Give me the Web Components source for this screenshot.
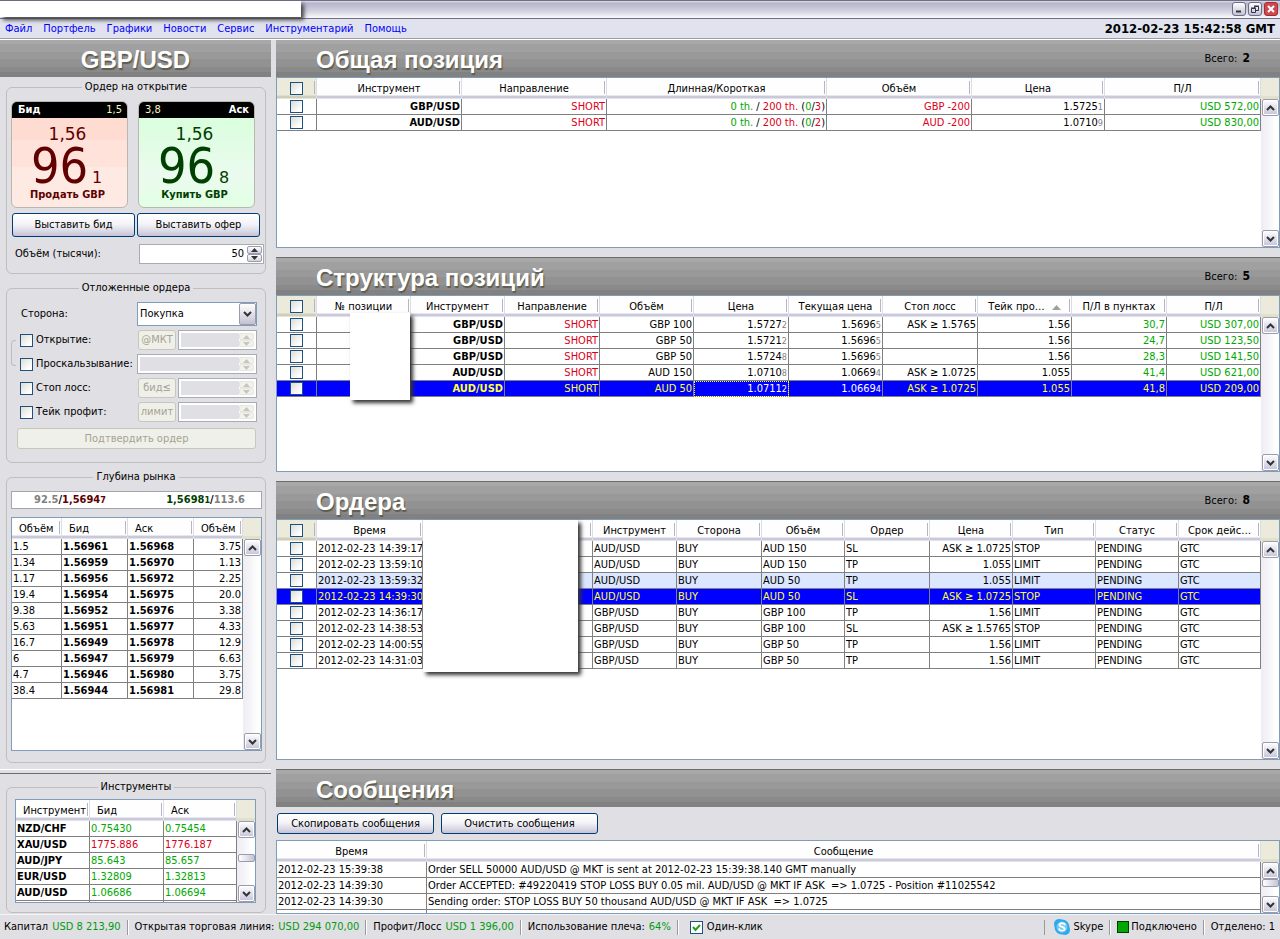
<!DOCTYPE html>
<html lang="ru">
<head>
<meta charset="utf-8">
<title>GBP/USD</title>
<style>
html, body { margin: 0; }
body { font: 11px/14px "DejaVu Sans Condensed", "Noto Sans", sans-serif; color: #000; background: #e0dfe3; }
</style>
</head>
<body>
<trade-app></trade-app>
<script>
const base = `
  *, *::before, *::after { box-sizing: border-box; }
  button, input, select { font: inherit; color: inherit; margin: 0; border-radius: 0; }
  input[type=checkbox] {
    appearance: none; display: block; flex: none; width: 13px; height: 13px;
    border: 1px solid #1c5180; background: linear-gradient(135deg, #dcdcd7, #fff 80%);
  }
  .xp {
    border: 1px solid #003c74; border-radius: 3px; padding: 0; white-space: nowrap;
    background: linear-gradient(#fff, #f4f4f8 45%, #dcdbe6 75%, #c4c3d6);
  }
  .xp:disabled { border-color: #c9c7ba; background: #f0f0ea; color: #a5a392; }
`;
const define = (name, css, html, init) => {
  const template = document.createElement('template');
  template.innerHTML = `<style>${base}${css}</style>${html}`;
  customElements.define(name, class extends HTMLElement {
    constructor() {
      super();
      this.attachShadow({ mode: 'open' }).append(template.content.cloneNode(true));
    }
    connectedCallback() { if (init) init(this, this.shadowRoot); }
  });
};

const price = (v, pip) => `${v}<small>${pip}</small>`;
const grids = {
  summary: {
    checks: true,
    cols: [['Инструмент', 145, 'r b'], ['Направление', 145, 'r red'], ['Длинная/Короткая', 220, 'r'], ['Объём', 145, 'r red'], ['Цена', 133, 'r'], ['П/Л', 156, 'r green']],
    rows: [
      ['GBP/USD', 'SHORT', '<span class="green">0 th.</span> / <span class="red">200 th.</span> (<span class="green">0</span>/<span class="red">3</span>)', 'GBP -200', price('1.5725', 1), 'USD 572,00'],
      ['AUD/USD', 'SHORT', '<span class="green">0 th.</span> / <span class="red">200 th.</span> (<span class="green">0</span>/<span class="red">2</span>)', 'AUD -200', price('1.0710', 9), 'USD 830,00'],
    ],
  },
  positions: {
    checks: true,
    cols: [['№ позиции', 94], ['Инструмент', 94, 'r b'], ['Направление', 95, 'r red'], ['Объём', 94, 'r'], ['Цена', 95, 'r w focus'], ['Текущая цена', 94, 'r w'], ['Стоп лосс', 95, 'r'],
      ['Тейк про… <svg class="sort" width="9" height="5"><path d="M0 5 4.500 0 9 5z" fill="#a0a0a0"/></svg>', 94, 'r'], ['П/Л в пунктах', 95, 'r green'], ['П/Л', 94, 'r green']],
    rows: [
      ['', 'GBP/USD', 'SHORT', 'GBP 100', price('1.5727', 2), price('1.5696', 5), 'ASK ≥ 1.5765', '1.56', '30,7', 'USD 307,00'],
      ['', 'GBP/USD', 'SHORT', 'GBP 50', price('1.5721', 2), price('1.5696', 5), '', '1.56', '24,7', 'USD 123,50'],
      ['', 'GBP/USD', 'SHORT', 'GBP 50', price('1.5724', 8), price('1.5696', 5), '', '1.56', '28,3', 'USD 141,50'],
      ['', 'AUD/USD', 'SHORT', 'AUD 150', price('1.0710', 8), price('1.0669', 4), 'ASK ≥ 1.0725', '1.055', '41,4', 'USD 621,00'],
      { state: 'sel', cells: ['', 'AUD/USD', 'SHORT', 'AUD 50', price('1.0711', 2), price('1.0669', 4), 'ASK ≥ 1.0725', '1.055', '41,8', 'USD 209,00'] },
    ],
  },
  orders: {
    checks: true,
    cols: [['Время', 106], ['', 170], ['Инструмент', 84], ['Сторона', 85], ['Объём', 83], ['Ордер', 85], ['Цена', 83, 'r'], ['Тип', 83], ['Статус', 83], ['Срок дейс…', 82]],
    rows: [
      ['14:39:17', 'AUD', '150', 'SL', 'ASK ≥ 1.0725', 'STOP'],
      ['13:59:10', 'AUD', '150', 'TP', '1.055', 'LIMIT'],
      ['13:59:32', 'AUD', '50', 'TP', '1.055', 'LIMIT', 'hot'],
      ['14:39:30', 'AUD', '50', 'SL', 'ASK ≥ 1.0725', 'STOP', 'sel'],
      ['14:36:17', 'GBP', '100', 'TP', '1.56', 'LIMIT'],
      ['14:38:53', 'GBP', '100', 'SL', 'ASK ≥ 1.5765', 'STOP'],
      ['14:00:55', 'GBP', '50', 'TP', '1.56', 'LIMIT'],
      ['14:31:03', 'GBP', '50', 'TP', '1.56', 'LIMIT'],
    ].map(([time, cur, size, kind, at, type, state]) => ({ state, cells: ['2012-02-23 ' + time, '', cur + '/USD', 'BUY', cur + ' ' + size, kind, at, type, 'PENDING', 'GTC'] })),
  },
  log: {
    thumb: 'top',
    cols: [['Время', 150], ['Сообщение', 834]],
    rows: [
      ['2012-02-23 15:39:38', 'Order SELL 50000 AUD/USD @ MKT is sent at 2012-02-23 15:39:38.140 GMT manually'],
      ['2012-02-23 14:39:30', 'Order ACCEPTED: #49220419 STOP LOSS BUY 0.05 mil. AUD/USD @ MKT IF ASK&nbsp; =&gt; 1.0725 - Position #11025542'],
      ['2012-02-23 14:39:30', 'Sending order: STOP LOSS BUY 50 thousand AUD/USD @ MKT IF ASK&nbsp; =&gt; 1.0725'],
      ['', ''],
    ],
  },
  depth: {
    cols: [['Объём', 50], ['Бид', 66, 'b'], ['Аск', 66, 'b'], ['Объём', 49, 'r']],
    rows: [
      ['1.5', '1.56961', '1.56968', '3.75'], ['1.34', '1.56959', '1.56970', '1.13'], ['1.17', '1.56956', '1.56972', '2.25'],
      ['19.4', '1.56954', '1.56975', '20.0'], ['9.38', '1.56952', '1.56976', '3.38'], ['5.63', '1.56951', '1.56977', '4.33'],
      ['16.7', '1.56949', '1.56978', '12.9'], ['6', '1.56947', '1.56979', '6.63'], ['4.7', '1.56946', '1.56980', '3.75'], ['38.4', '1.56944', '1.56981', '29.8'],
    ],
  },
  quotes: {
    thumb: 'middle',
    cols: [['Инструмент', 74, 'b'], ['Бид', 74], ['Аск', 73]],
    rows: [
      { tone: 'green', cells: ['NZD/CHF', '0.75430', '0.75454'] },
      { tone: 'red', cells: ['XAU/USD', '1775.886', '1776.187'] },
      { tone: 'green', cells: ['AUD/JPY', '85.643', '85.657'] },
      { tone: 'green', cells: ['EUR/USD', '1.32809', '1.32813'] },
      { tone: 'green', cells: ['AUD/USD', '1.06686', '1.06694'] },
      ['', '', ''],
    ],
  },
};

/* Section heading strip */
define('section-banner', `
  :host { display: flex; align-items: center; height: 37px; padding: 0 30px 0 40px; flex: none;
    background: linear-gradient(#a8a8a8 0 12%, #a0a0a0 12% 32%, #999 32% 52%, #929292 52% 72%, #8a8a8a 72% 87%, #818181 87%); }
  :host([ruled]) { height: 38px; border-top: 1px solid #6c6d66; }
  :host([centered]) { justify-content: center; padding: 0; }
  h2 { margin: 0; padding-top: 2px; font: bold 24px/28px "Liberation Sans", sans-serif; color: #fff; text-shadow: 1px 2px 1px #5d5c50; white-space: nowrap; }
  div { margin-left: auto; white-space: nowrap; }
  div:empty { display: none; }
  b { font-size: 12px; margin-left: 2px; }
`, `<h2><slot></slot></h2><div></div>`, (host, root) => {
  const total = host.getAttribute('total');
  if (total) root.querySelector('div').innerHTML = `Всего: <b>${total}</b>`;
});

/* Framed group with a centred caption */
define('group-box', `
  :host { display: flex; margin: 0 5px 0 6px; flex: none; }
  fieldset { flex: 1; min-width: 0; margin: 0; padding: 0; border: 1px solid #bfbfbf; border-radius: 6px; }
  legend { margin: 0 auto; padding: 0 3px; line-height: 14px; }
`, `<fieldset><legend></legend><slot></slot></fieldset>`, (host, root) => {
  root.querySelector('legend').textContent = host.getAttribute('caption');
});

/* Vertical scroll bar with arrows */
define('scroll-bar', `
  :host { display: flex; flex-direction: column; width: 18px; padding: 0 0 0 1px; background: linear-gradient(90deg, #eeedf3, #f4f4f8 40%, #fff 80%); }
  button { display: flex; align-items: center; justify-content: center; flex: none; width: 17px; height: 17px; padding: 0; border: 1px solid #9c9bad; border-radius: 2px; background: linear-gradient(#fff, #e4e3ee 45%, #c6c5d6); box-shadow: inset 0 0 0 1px #fff; }
  i { flex: 1; }
  .lower { flex-grow: 1; }
  .thumb { height: 8px; flex: none; display: none; border: 1px solid #9c9bad; border-radius: 2px; background: linear-gradient(90deg, #fff, #c6c5d6); }
  :host([thumb]) .thumb { display: block; }
  :host([thumb]) .upper { flex: none; height: 0; }
  :host([thumb=middle]) .upper { flex: 2; }
  :host([thumb=middle]) .lower { flex-grow: 3; }
`, `<button type="button" aria-label="Вверх"><svg width="9" height="6"><path d="M1 5 4.500 1.500 8 5" fill="none" stroke="#333" stroke-width="2"/></svg></button>
<i class="upper"></i><div class="thumb"></div><i class="lower"></i>
<button type="button" aria-label="Вниз"><svg width="9" height="6"><path d="M1 1 4.500 4.500 8 1" fill="none" stroke="#333" stroke-width="2"/></svg></button>`);

/* Data table, filled from the grid named by its source attribute */
define('data-grid', `
  :host { display: block; position: relative; min-height: 0; }
  .frame { display: flex; height: 100%; border: 1px solid #7f9db9; background: #fff; overflow: hidden; }
  .view { flex: 1; min-width: 0; overflow: hidden; }
  .side { display: flex; flex-direction: column; width: 18px; flex: none; }
  .corner { height: 21px; background: #ebeadb; border-bottom: 3px solid #e1e0cb; flex: none; }
  scroll-bar { flex: 1; }
  table { width: 100%; border-collapse: separate; border-spacing: 0; table-layout: fixed; }
  th { position: relative; height: 21px; padding: 0 4px; font-weight: normal; line-height: 16px; white-space: nowrap; overflow: hidden;
    border-right: 1px solid #dddde6; background: linear-gradient(#fefefe 0 17px, #e6e6ee 17px 18px, #c9c9d9 18px 20px, #e2e2ea 20px); }
  th::after { content: ""; position: absolute; right: 1px; top: 3px; width: 1px; height: 13px; background: #b5b4c9; }
  th.pick { background: linear-gradient(#ebeadb 0 17px, #dfdeca 17px 18px, #cfcebc 18px 20px, #e5e4d2 20px); }
  :host([lefthead]) th { text-align: left; padding: 0 0 0 7px; }
  td { height: 16px; padding: 0 1px; line-height: 15px; white-space: nowrap; overflow: hidden; border: solid #808080; border-width: 0 1px 1px 0; }
  input { margin: 0 auto; }
  .r { text-align: right; }
  .b { font-weight: bold; }
  .red { color: #dc0018; }
  .green { color: #00a800; }
  small { font-size: 9px; line-height: 1px; color: #808080; }
  tr.hot td:not(.box) { background: #dbe6ff; }
  tr.sel td { background: #00f; color: #ff3; }
  tr.sel td.w, tr.sel small { color: #fff; }
  tr.sel td.focus { outline: 1px dotted #ff3; outline-offset: -1px; }
  .sort { margin-left: 4px; }
`, `<div class="frame"><div class="view"><table><colgroup></colgroup><thead></thead><tbody></tbody></table></div>
<div class="side"><div class="corner"></div><scroll-bar></scroll-bar></div></div><slot></slot>`, (host, root) => {
  const { cols, rows, checks, thumb } = grids[host.getAttribute('source')];
  if (thumb) root.querySelector('scroll-bar').setAttribute('thumb', thumb);
  root.querySelector('colgroup').innerHTML = (checks ? '<col style="width:40px">' : '') + cols.map(c => `<col style="width:${c[1]}px">`).join('');
  root.querySelector('thead').innerHTML = '<tr>' + (checks ? '<th class="pick"><input type="checkbox" aria-label="Выбрать все"></th>' : '') +
    cols.map(c => `<th scope="col">${c[0]}</th>`).join('') + '</tr>';
  root.querySelector('tbody').innerHTML = rows.map(row => {
    const state = row.state || '', cells = row.cells || row;
    return `<tr class="${state}">` + (checks ? '<td class="box"><input type="checkbox" aria-label="Выбрать строку"></td>' : '') +
      cells.map((v, i) => `<td class="${cols[i][2] || ''} ${row.tone && i ? row.tone : ''}">${v}</td>`).join('') + '</tr>';
  }).join('');
});

/* Bid / ask tile */
define('price-tile', `
  :host { display: block; width: 117px; }
  button { display: block; width: 100%; height: 107px; padding: 0; overflow: hidden; border: 1px solid #b9b8b0; border-radius: 6px; color: #600000;
    background: linear-gradient(#ffdcd1 0 36%, #ffe3da 36% 62%, #ffeae3 62%); }
  :host([side=ask]) button { color: #004000; background: linear-gradient(#d5ffd9, #ebfbee 70%, #e2ffe4); }
  .top { display: flex; justify-content: space-between; height: 16px; padding: 0 5px 0 6px; line-height: 16px; background: #000; color: #f6f6c0; }
  :host([side=ask]) .top { flex-direction: row-reverse; }
  .top b { color: #fff; }
  .lead { display: block; height: 26px; padding: 6px 4px 0 0; font: 17px/20px "DejaVu Sans", sans-serif; }
  .big { display: flex; align-items: baseline; justify-content: center; font-size: 50px; line-height: 44px; height: 42px; padding-right: 6px; }
  .big span { font: 16px/20px "DejaVu Sans", sans-serif; margin-left: 4px; width: 10px; }
  .act { display: block; height: 21px; padding-right: 4px; font-weight: bold; line-height: 18px; }
`, `<button type="button"><span class="top"><b></b><span class="size"></span></span><span class="lead"></span><span class="big"><slot></slot><span class="pip"></span></span><span class="act"></span></button>`,
(host, root) => {
  const put = (sel, attr) => root.querySelector(sel).textContent = host.getAttribute(attr);
  put('.top b', 'label'); put('.size', 'size'); put('.lead', 'lead'); put('.pip', 'pip'); put('.act', 'action');
});

/* Numeric field with up/down arrows */
define('spin-field', `
  :host { display: flex; height: 20px; border: 1px solid #a5acb2; background: #fff; padding: 1px; }
  input { flex: 1; min-width: 0; border: 0; padding: 0 3px; background: #fff; text-align: right; outline: none; }
  .arrows { display: flex; flex-direction: column; width: 15px; flex: none; }
  .arrows button { flex: 1; display: flex; align-items: center; justify-content: center; padding: 0; border: 1px solid #9c9bad; border-radius: 2px; background: linear-gradient(#fff, #d2d1de); color: #333; }
  :host([off]) { padding: 2px; }
  :host([off]) input { background: #e0dfe3; }
  :host([off]) .arrows button { border-color: #e6e6de; background: #f2f2ec; color: #c6c6be; }
  svg { display: block; }
`, `<input type="text"><div class="arrows"><button type="button" aria-label="Больше"><svg width="7" height="4"><path d="M0 4 3.500 0 7 4z" fill="currentColor"/></svg></button><button type="button" aria-label="Меньше"><svg width="7" height="4"><path d="M0 0 3.500 4 7 0z" fill="currentColor"/></svg></button></div>`,
(host, root) => {
  const input = root.querySelector('input');
  input.value = host.getAttribute('value') || '';
  input.setAttribute('aria-label', host.getAttribute('label'));
  if (host.hasAttribute('off')) root.querySelectorAll('input, button').forEach(e => e.disabled = true);
});

/* Window caption and menu */
define('window-head', `
  :host { display: block; }
  .caption { position: relative; display: flex; justify-content: flex-end; gap: 2px; height: 19px; padding: 1px 2px 0; border: solid #6f6e88; border-width: 1px 0; background: linear-gradient(#d4d4e2 0 1px, #b5b4ca 2px, #d2d1df 60%, #fbfbfd); }
  .caption button { width: 14px; height: 14px; padding: 0; border: 1px solid #6d6d86; border-radius: 3px; background: linear-gradient(#fff, #c2c1d2); }
  .caption .close { border-color: #a02c34; background: #cf4850; }
  svg { display: block; }
  .title { position: absolute; z-index: 1; left: 0; top: 0; width: 301px; height: 16px; background: #fff; box-shadow: 3px 3px 4px #444; }
  nav { display: flex; align-items: center; gap: 11px; height: 21px; padding: 0 5px 1px; border-bottom: 1px solid #fff; box-shadow: inset 0 -1px #9d9ca6; background: #e0e3ee; }
  nav button { border: 0; padding: 0; background: none; color: #00f; white-space: nowrap; }
  time { margin-left: auto; font-size: 13px; font-weight: bold; white-space: nowrap; }
`, `<div class="caption"><div class="title"></div>
  <button type="button" aria-label="Свернуть"><svg width="12" height="12"><path d="M3 8.500h5" stroke="#333" stroke-width="2"/></svg></button>
  <button type="button" aria-label="Восстановить"><svg width="12" height="12"><path d="M2.500 5.500h4v4h-4zM5.500 5V3.500h4v4H7M5 3h5M2 5h5" fill="none" stroke="#33334a"/></svg></button>
  <button type="button" class="close" aria-label="Закрыть"><svg width="12" height="12"><path d="M3 3l6 6M9 3l-6 6" stroke="#fff" stroke-width="2"/></svg></button>
</div>
<nav><button>Файл</button><button>Портфель</button><button>Графики</button><button>Новости</button><button>Сервис</button><button>Инструментарий</button><button>Помощь</button><time>2012-02-23 15:42:58 GMT</time></nav>`);

/* Opening order form */
define('open-order', `
  :host { display: block; padding: 7px 0 9px 4px; }
  .tiles { display: flex; gap: 10px; }
  .buttons { display: flex; gap: 2px; margin: 5px 5px 7px 1px; }
  .buttons .xp { flex: 1; height: 24px; }
  .volume { display: flex; align-items: center; justify-content: space-between; padding: 0 1px 0 4px; }
  spin-field { width: 125px; }
`, `<div class="tiles"><price-tile side="bid" label="Бид" size="1,5" lead="1,56" pip="1" action="Продать GBP">96</price-tile><price-tile side="ask" label="Аск" size="3,8" lead="1,56" pip="8" action="Купить GBP">96</price-tile></div>
<div class="buttons"><button class="xp">Выставить бид</button><button class="xp">Выставить офер</button></div>
<div class="volume"><span>Объём (тысячи):</span><spin-field label="Объём (тысячи)" value="50"></spin-field></div>`);

/* Pending order form */
define('pending-order', `
  :host { display: block; padding: 7px 8px 13px 4px; }
  .side { display: grid; grid-template-columns: 1fr 120px; align-items: center; padding-left: 10px; margin-bottom: 4px; }
  .select { display: flex; align-items: center; height: 24px; border: 1px solid #7f9db9; background: #fff; }
  select { appearance: none; flex: 1; min-width: 0; height: 20px; border: 0; background: none; padding: 0 2px; outline: none; margin-right: -17px; }
  .drop { display: flex; align-items: center; justify-content: center; width: 17px; height: 22px; border: 1px solid #9c9bad; border-radius: 2px; background: linear-gradient(#fff, #c2c1d2); pointer-events: none; }
  .rows { display: grid; grid-template-columns: 5px 1fr; column-gap: 4px; }
  .link { height: 26px; margin: 10px 0; border: 1px solid #bdbdbd; border-right: 0; border-radius: 4px 0 0 4px; }
  .list { display: grid; gap: 4px; min-width: 0; }
  .row { display: grid; grid-template-columns: 1fr 120px; align-items: center; }
  label { display: flex; align-items: center; gap: 3px; white-space: nowrap; }
  .field { display: flex; gap: 2px; padding-left: 1px; }
  .field.wide { padding: 0; }
  .field .xp { width: 38px; height: 20px; flex: none; }
  .field spin-field { flex: 1; min-width: 0; }
  .confirm { display: block; height: 21px; margin: 6px 1px 0 6px; width: calc(100% - 7px); }
`, `<div class="side"><label for="s">Сторона:</label><div class="select"><select id="s"><option>Покупка</option><option>Продажа</option></select><div class="drop"><svg width="9" height="6"><path d="M1 1 4.500 4.500 8 1" fill="none" stroke="#333" stroke-width="2"/></svg></div></div></div>
<div class="rows"><div><div class="link"></div></div><div class="list">
<div class="row"><label><input type="checkbox">Открытие:</label><div class="field"><button class="xp" disabled>@МКТ</button><spin-field off label="Открытие"></spin-field></div></div>
<div class="row"><label><input type="checkbox">Проскальзывание:</label><div class="field wide"><spin-field off label="Проскальзывание"></spin-field></div></div>
<div class="row"><label><input type="checkbox">Стоп лосс:</label><div class="field"><button class="xp" disabled>бид≤</button><spin-field off label="Стоп лосс"></spin-field></div></div>
<div class="row"><label><input type="checkbox">Тейк профит:</label><div class="field"><button class="xp" disabled>лимит</button><spin-field off label="Тейк профит"></spin-field></div></div>
</div></div><button class="xp confirm" disabled>Подтвердить ордер</button>`);

/* Market depth */
define('market-depth', `
  :host { display: flex; flex-direction: column; gap: 8px; height: 278px; padding: 7px 3px 11px 4px; }
  .best { display: flex; justify-content: space-between; align-items: center; height: 18px; flex: none; padding: 0 16px 0 22px; border: 1px solid #a5a5ad; background: #fff; font-weight: bold; color: #808080; }
  .bid { color: #600000; } .ask { color: #004000; } small { font-size: 9px; } i { font-style: normal; color: #000; }
  data-grid { flex: 1; }
`, `<div class="best"><span>92.5<i>/</i><span class="bid">1,5694<small>7</small></span></span><span><span class="ask">1,5698<small>1</small></span><i>/</i>113.6</span></div><data-grid source="depth" lefthead></data-grid>`);

/* Status line */
define('status-line', `
  :host { display: flex; align-items: center; height: 25px; padding: 0 5px 0 4px; white-space: nowrap; border-top: 1px solid #f4f4f6; }
  span, label { display: flex; align-items: center; gap: 4px; padding-right: 6px; margin-right: 7px; border-right: 1px solid #9a99a0; box-shadow: 1px 0 #fff; height: 15px; }
  label, span:last-child { border: 0; box-shadow: none; }
  span:last-child { margin: 0; padding: 0; }
  label { margin-right: auto; padding-left: 5px; }
  em { font-style: normal; color: #009c10; }
  .g { gap: 2px; }
  .sky { gap: 3px; border-left: 1px solid #9a99a0; padding-left: 9px; }
  .lamp { width: 12px; height: 12px; background: #00a800; border: 1px solid #003c00; }
  input:checked { background: #fff url("data:image/svg+xml,%3Csvg xmlns='http://www.w3.org/2000/svg' width='11' height='11'%3E%3Cpath d='M2 5l2.500 3L9 3' fill='none' stroke='%2321a121' stroke-width='2'/%3E%3C/svg%3E"); }
`, `<span>Капитал <em>USD 8 213,90</em></span><span>Открытая торговая линия: <em>USD 294 070,00</em></span><span>Профит/Лосс <em>USD 1 396,00</em></span><span>Использование плеча: <em>64%</em></span><label><input type="checkbox" checked>Один-клик</label>
<span class="sky"><svg width="16" height="16" viewBox="0 0 16 16"><circle cx="5" cy="5" r="5" fill="#2aabee"/><circle cx="11" cy="11" r="5" fill="#2aabee"/><circle cx="8" cy="8" r="7.500" fill="#2aabee"/><circle cx="8" cy="8" r="5.500" fill="#fff" opacity=".35"/><path d="M10.800 5.500C10 3.800 5.300 3.700 5.400 6c.1 2.100 5.400 1.500 5.300 4-.2 2.200-4.800 2.200-5.500.2" fill="none" stroke="#fff" stroke-width="1.800" stroke-linecap="round"/></svg>Skype</span><span class="g"><i class="lamp"></i>Подключено</span><span>Отделено: 1</span>`);

/* Whole window */
define('trade-app', `
  :host { display: grid; grid-template-rows: auto 1fr auto; min-height: 100vh; }
  main { display: grid; grid-template-columns: 271px minmax(0, 1fr); column-gap: 5px; min-height: 0; }
  aside { display: flex; flex-direction: column; gap: 7px; min-height: 0; }
  aside section-banner { margin-bottom: -4px; }
  hr { width: 100%; height: 5px; margin: -1px 0; border: solid; border-width: 1px 0; border-color: #fff transparent #6c6d66; }
  .work { display: grid; grid-template-rows: auto 171fr auto 177fr auto 241fr auto auto 74px; min-height: 0; }
  .gap { margin-top: 9px; }
  .tools { display: flex; gap: 7px; padding: 6px 1px; height: 33px; }
  .tools .xp { width: 157px; height: 21px; }
  .cover { position: absolute; background: #fff; box-shadow: 3px 3px 4px #333; }
  .ids { left: 74px; top: 18px; width: 60px; height: 87px; }
  .refs { left: 147px; top: 1px; width: 155px; height: 152px; }
  .quotes { height: 104px; margin: 5px 9px 9px 8px; }
`, `<window-head></window-head>
<main>
<aside><section-banner centered>GBP/USD</section-banner>
<group-box caption="Ордер на открытие"><open-order></open-order></group-box>
<group-box caption="Отложенные ордера"><pending-order></pending-order></group-box>
<group-box caption="Глубина рынка"><market-depth></market-depth></group-box>
<hr>
<group-box caption="Инструменты"><data-grid class="quotes" source="quotes" lefthead></data-grid></group-box></aside>
<div class="work">
<section-banner total="2">Общая позиция</section-banner><data-grid source="summary"></data-grid>
<section-banner ruled class="gap" total="5">Структура позиций</section-banner><data-grid source="positions"><div class="cover ids"></div></data-grid>
<section-banner ruled class="gap" total="8">Ордера</section-banner><data-grid source="orders"><div class="cover refs"></div></data-grid>
<section-banner ruled class="gap">Сообщения</section-banner>
<div class="tools"><button class="xp">Скопировать сообщения</button><button class="xp">Очистить сообщения</button></div>
<data-grid source="log"></data-grid>
</div>
</main>
<status-line></status-line>`);
</script>
</body>
</html>
